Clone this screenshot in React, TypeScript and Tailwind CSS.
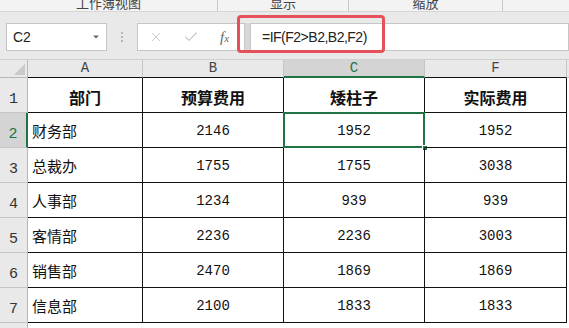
import { ChevronDown, X, Check } from "lucide-react";

const cols = [
  { key: "A", w: "w-[115px]" },
  { key: "B", w: "w-[141px]" },
  { key: "C", w: "w-[141px]" },
  { key: "F", w: "w-[142px]" },
];

const header = ["部门", "预算费用", "矮柱子", "实际费用"];

const rows: [string, number, number, number][] = [
  ["财务部", 2146, 1952, 1952],
  ["总裁办", 1755, 1755, 3038],
  ["人事部", 1234, 939, 939],
  ["客情部", 2236, 2236, 3003],
  ["销售部", 2470, 1869, 1869],
  ["信息部", 2100, 1833, 1833],
];

const cjk = "font-['Noto_Sans_CJK_SC',sans-serif]";
const mono = "font-['Liberation_Mono',monospace]";

function RowHead({ n, active }: { n: number; active?: boolean }) {
  return (
    <div
      className={`w-[28px] h-[35px] shrink-0 flex items-end justify-center pb-[1px] border-b border-[#c4c4c4] text-[15px] ${mono} ${
        active
          ? "bg-[#d4d4d4] text-[#217346] border-r-2 border-r-[#217346]"
          : "bg-[#e9e9e9] text-[#333] border-r border-r-[#b8b8b8]"
      }`}
    >
      {n}
    </div>
  );
}

function Cell({
  w,
  children,
  left,
  bold,
  selected,
}: {
  w: string;
  children: React.ReactNode;
  left?: boolean;
  bold?: boolean;
  selected?: boolean;
}) {
  return (
    <div
      className={`${w} h-[35px] shrink-0 relative flex items-center pt-[3px] border-r border-b border-[#111] ${
        left ? "justify-start pl-[4px]" : "justify-center"
      } ${bold ? `font-bold text-[16px] ${cjk}` : "text-[15px]"} text-[#111]`}
    >
      {children}
      {selected && (
        <>
          <div className="absolute -left-[1px] -top-[1px] -right-[1px] -bottom-[1px] border-2 border-[#217346]" />
          <div className="absolute -right-[4px] -bottom-[4px] w-[6px] h-[6px] bg-[#217346] border border-white" />
        </>
      )}
    </div>
  );
}

export default function App() {
  return (
    <div className="relative w-[569px] h-[328px] overflow-hidden bg-white">
      {/* ribbon group labels, clipped by the window top */}
      <div className={`flex h-[12px] bg-[#f3f3f3] border-b border-[#d6d6d6] overflow-hidden text-[13px] text-[#444] ${cjk}`}>
        <div className="w-[218px] border-r border-[#c8c8c8] text-center leading-[13px] -mt-[4px]">工作簿视图</div>
        <div className="w-[131px] border-r border-[#c8c8c8] text-center leading-[13px] -mt-[4px]">显示</div>
        <div className="w-[154px] border-r border-[#c8c8c8] text-center leading-[13px] -mt-[4px]">缩放</div>
        <div className="flex-1" />
      </div>

      {/* formula bar */}
      <div className="flex items-start h-[48px] bg-[#e9e9e9] pt-[11px] border-b border-[#d0d0d0]">
        <div className="ml-[6px] w-[101px] h-[28px] bg-white border border-[#c6c6c6] flex items-center justify-between pl-[6px] pr-[4px]">
          <span className="text-[14px] text-[#222] font-['Liberation_Sans',sans-serif]">C2</span>
          <ChevronDown size={12} strokeWidth={0} fill="#666" className="text-[#666]" />
        </div>
        <div className="w-[30px] h-[28px] flex flex-col items-center justify-center gap-[2px]">
          <span className="w-[2px] h-[2px] bg-[#b5b5b5]" />
          <span className="w-[2px] h-[2px] bg-[#b5b5b5]" />
          <span className="w-[2px] h-[2px] bg-[#b5b5b5]" />
        </div>
        <div className="w-[108px] h-[28px] bg-white border border-[#c6c6c6] flex items-center pl-[10px]">
          <X size={16} strokeWidth={1.3} className="text-[#c4c4c4]" />
          <Check size={16} strokeWidth={1.6} className="ml-[19px] text-[#c4c4c4]" />
          <span className="ml-[21px] italic text-[15px] text-[#666] font-['Liberation_Serif',serif]">
            f<span className="text-[11px]">x</span>
          </span>
        </div>
        <div className="w-[5px] h-[28px] bg-[#d8d8d8]" />
        <div className="flex-1 h-[28px] bg-white border border-[#c6c6c6] flex items-center pl-[11px]">
          <span className="text-[14px] tracking-[-0.5px] text-[#222] font-['Liberation_Sans',sans-serif]">=IF(F2&gt;B2,B2,F2)</span>
        </div>
      </div>

      {/* grid */}
      <div className="flex flex-col">
        <div className={`flex h-[18px] text-[14px] text-[#444] ${mono}`}>
          <div className="w-[28px] h-[18px] shrink-0 bg-[#e9e9e9] border-r border-b border-[#b8b8b8] relative">
            <div className="absolute right-[2px] bottom-[2px] w-0 h-0 border-l-[11px] border-l-transparent border-b-[11px] border-b-[#c9c9c9]" />
          </div>
          {cols.map((c) => (
            <div
              key={c.key}
              className={`${c.w} h-[18px] shrink-0 flex items-center justify-center border-r border-[#c4c4c4] ${
                c.key === "C"
                  ? "bg-[#d4d4d4] text-[#217346] border-b-2 border-b-[#217346]"
                  : "bg-[#e9e9e9] border-b border-b-[#111]"
              }`}
            >
              {c.key}
            </div>
          ))}
          <div className="flex-1 bg-[#e9e9e9] border-b border-[#c4c4c4]" />
        </div>

        <div className="flex">
          <RowHead n={1} />
          {cols.map((c, i) => (
            <Cell key={c.key} w={c.w} bold>
              {header[i]}
            </Cell>
          ))}
        </div>

        {rows.map((r, ri) => (
          <div key={r[0]} className="flex">
            <RowHead n={ri + 2} active={ri === 0} />
            <Cell w={cols[0].w} left>
              <span className={`text-[15px] ${cjk}`}>{r[0]}</span>
            </Cell>
            <Cell w={cols[1].w}>
              <span className={mono + " text-[14px]"}>{r[1]}</span>
            </Cell>
            <Cell w={cols[2].w} selected={ri === 0}>
              <span className={mono + " text-[14px]"}>{r[2]}</span>
            </Cell>
            <Cell w={cols[3].w}>
              <span className={mono + " text-[14px]"}>{r[3]}</span>
            </Cell>
          </div>
        ))}

        <div className="flex">
          <div className="w-[28px] h-[20px] bg-[#e9e9e9] border-r border-[#b8b8b8]" />
        </div>
      </div>

      {/* highlight around the formula */}
      <div className="absolute left-[237px] top-[15px] w-[148px] h-[38px] border-[3px] border-[#e5505a] rounded-[4px]" />
    </div>
  );
}
